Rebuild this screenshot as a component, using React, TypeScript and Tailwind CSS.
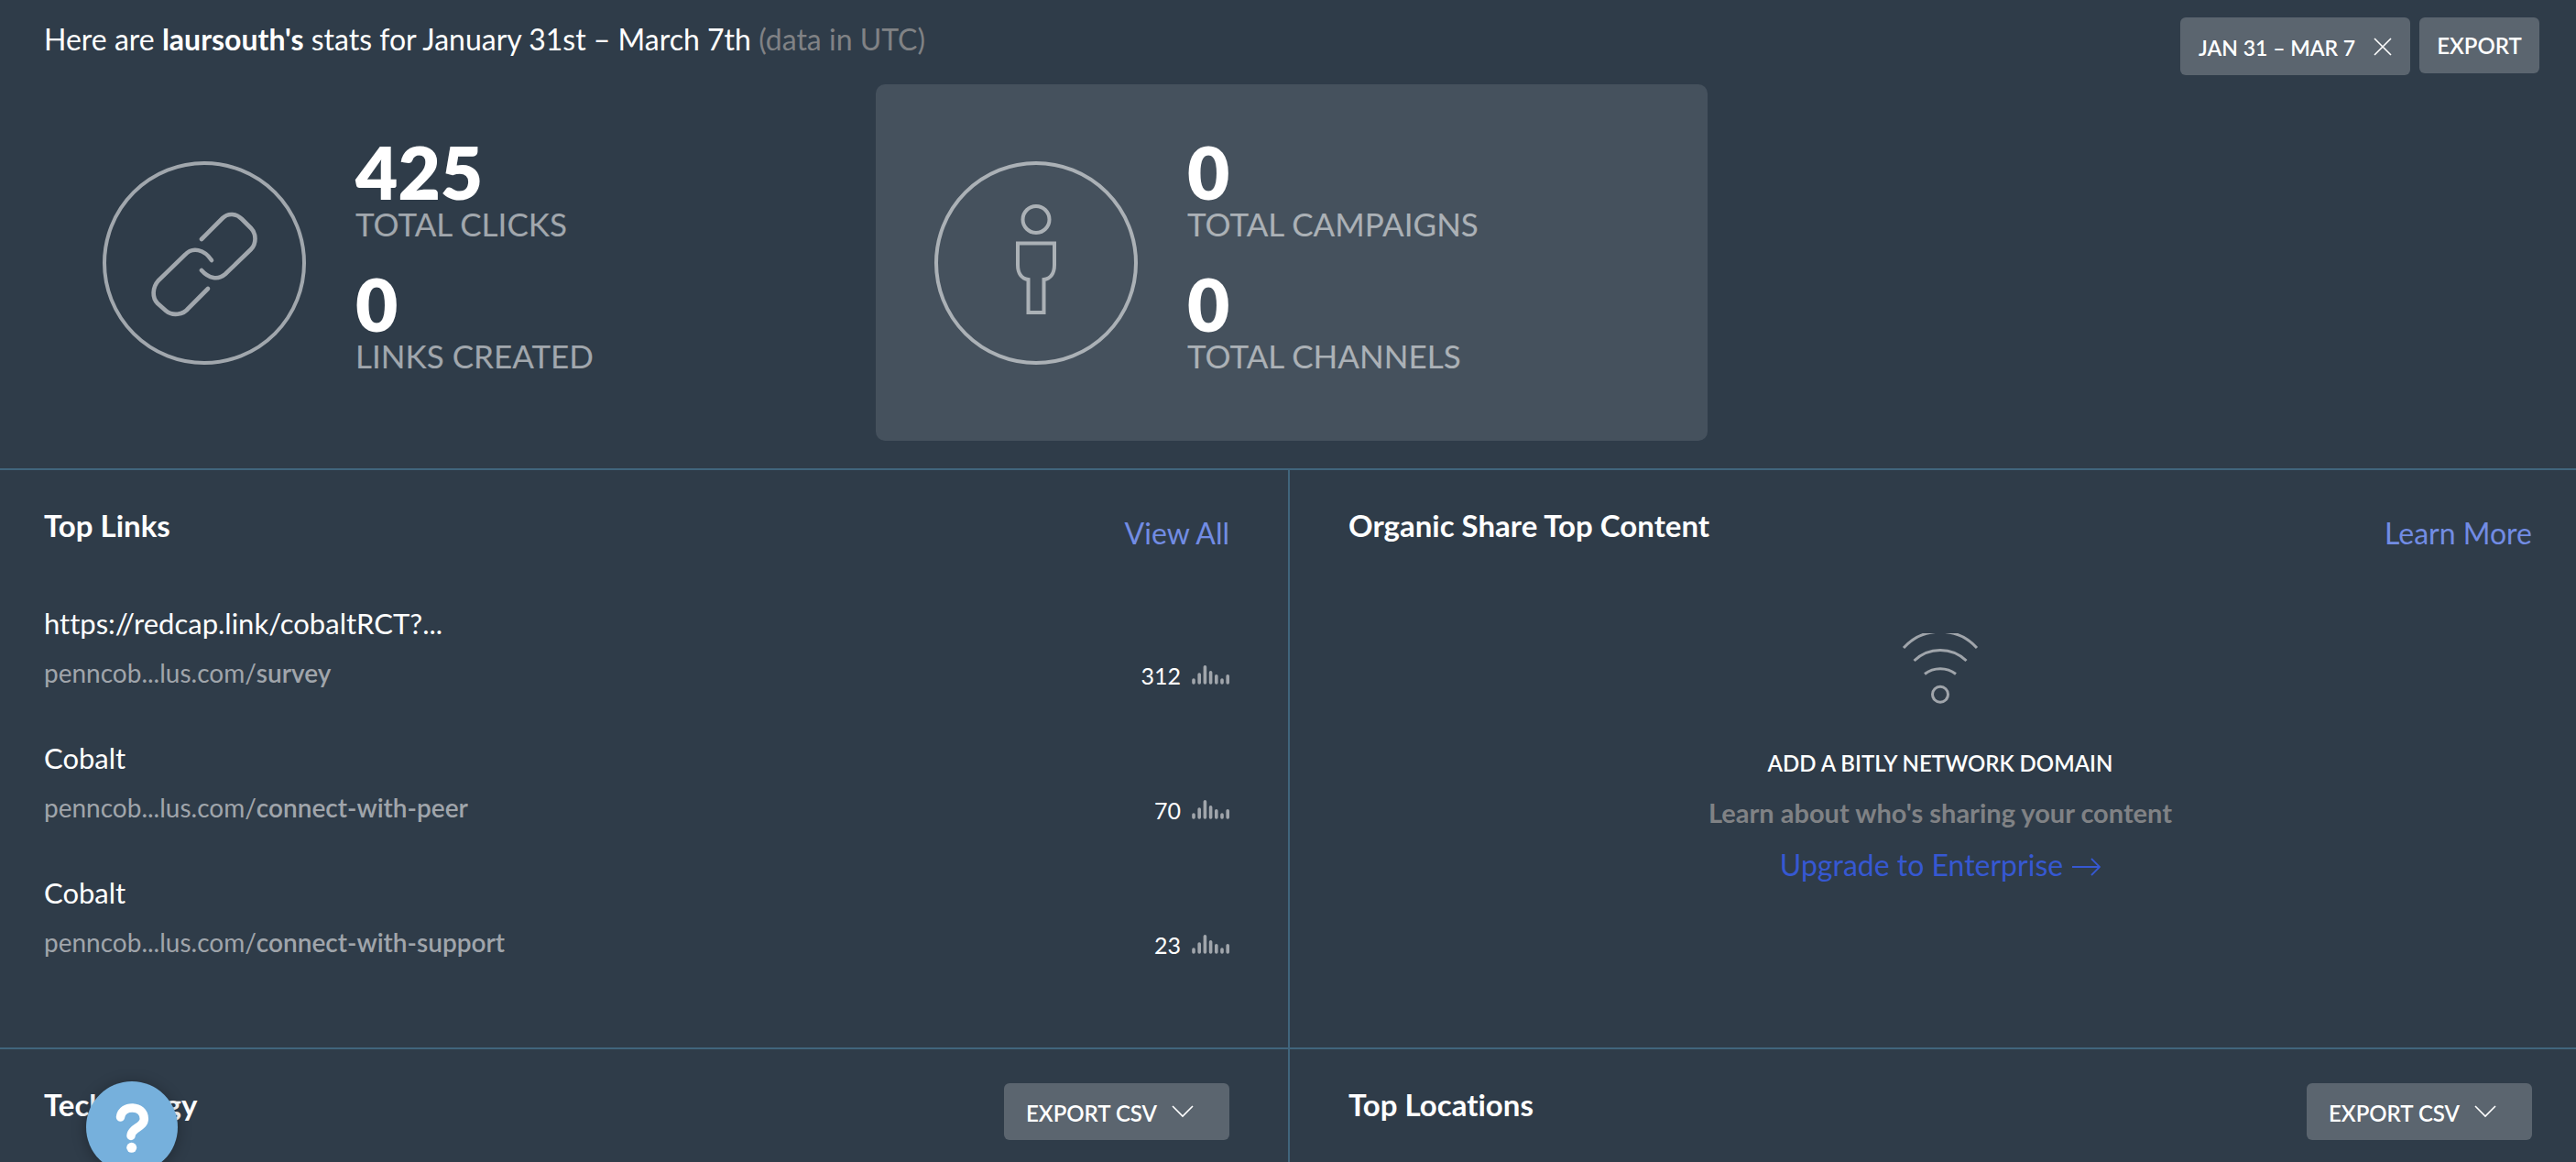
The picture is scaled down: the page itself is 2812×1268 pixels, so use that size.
import React from "react";

type Stat = { value: string; label: string };

function StatCard({
  stats,
  highlighted = false,
  children,
}: {
  stats: Stat[];
  highlighted?: boolean;
  children: React.ReactNode;
}) {
  return (
    <div
      className={
        highlighted
          ? "flex items-start gap-[54px] rounded-[10px] bg-[#45515d] px-16 pt-[60px] pb-[71px]"
          : "flex items-start gap-[54px] rounded-[10px] px-16 pt-[60px] pb-[71px]"
      }
    >
      <svg
        viewBox="0 0 222 222"
        className="mt-6 size-[222px] shrink-0 text-white/55"
        fill="none"
        stroke="currentColor"
        strokeWidth="4"
        aria-hidden="true"
      >
        <circle cx="111" cy="111" r="109" />
        {children}
      </svg>
      <dl className="flex flex-col gap-[30px]">
        {stats.map((s) => (
          <div key={s.label} className="flex flex-col-reverse">
            <dt className="text-[35px] leading-[44px] whitespace-nowrap text-white/55">{s.label}</dt>
            <dd className="text-[80px] leading-[70px] font-extrabold">{s.value}</dd>
          </div>
        ))}
      </dl>
    </div>
  );
}

const LINKS = [
  { title: "https://redcap.link/cobaltRCT?...", slug: "survey", clicks: "312" },
  { title: "Cobalt", slug: "connect-with-peer", clicks: "70" },
  { title: "Cobalt", slug: "connect-with-support", clicks: "23" },
];

function Bars() {
  return (
    <svg viewBox="0 0 41 22" className="h-[22px] w-[41px]" stroke="#a0a5ab" strokeWidth="3.6" strokeLinecap="round" aria-hidden="true">
      <path d="M2 16V19M8.2 10V19M14.4 1.8V19M20.6 7.8V19M26.8 11.8V19M33 16V19M39.2 11.8V19" />
    </svg>
  );
}

function PanelHead({ title, action }: { title: string; action: React.ReactNode }) {
  return (
    <div className="flex items-start justify-between">
      <h2 className="text-[33px] leading-10 font-bold">{title}</h2>
      {action}
    </div>
  );
}

function PanelLink({ children }: { children: React.ReactNode }) {
  return (
    <a href="#" className="mt-2 text-[32px] leading-[42px] text-[#728ce4]">
      {children}
    </a>
  );
}

function ExportCsv() {
  return (
    <button
      type="button"
      className="-mt-[3px] flex h-[62px] w-[246px] items-center gap-4 rounded-md bg-[#5b656f] pt-1 pl-6 text-2xl font-semibold"
    >
      EXPORT CSV
      <svg viewBox="0 0 24 14" className="mb-1 h-[14px] w-6" fill="none" stroke="currentColor" strokeWidth="1.6" aria-hidden="true">
        <path d="M1 1L12 12L23 1" />
      </svg>
    </button>
  );
}

export default function App() {
  return (
    <div className="flex min-h-screen flex-col bg-[#2f3c49] font-['Lato',sans-serif] text-white [font-variant-ligatures:none]">
      <header className="flex items-start justify-between pt-[19px] pr-10 pl-12">
        <h1 className="pt-[3px] text-[32px] leading-[42px]">
          Here are <strong className="font-bold">laursouth's</strong> stats for January 31st – March 7th{" "}
          <span className="text-[#808285]">(data in UTC)</span>
        </h1>
        <div className="flex items-start gap-[10px]">
          <button type="button" className="flex h-[63px] w-[251px] items-center justify-between rounded-md bg-[#5b656f] pt-1 pr-5 pl-5 text-[23px] font-semibold">
            JAN 31 – MAR 7
            <svg viewBox="0 0 20 20" className="mb-1 size-5" stroke="currentColor" strokeWidth="1.6" aria-hidden="true">
              <path d="M1 1L19 19M19 1L1 19" />
            </svg>
          </button>
          <button type="button" className="h-[61px] w-[131px] rounded-md bg-[#5b656f] text-2xl font-semibold">
            EXPORT
          </button>
        </div>
      </header>

      <section aria-label="Totals" className="mt-[10px] grid grid-cols-3 pr-10 pb-[30px] pl-12">
        <StatCard
          stats={[
            { value: "425", label: "TOTAL CLICKS" },
            { value: "0", label: "LINKS CREATED" },
          ]}
        >
          <g strokeWidth="4.6" strokeLinecap="round">
            <path d="M108 85L131 62C137 56 146 57 152 63L162 73C168 79 168 90 162 96L134 123C126 130 116 128 108 119" />
            <path d="M119 108C111 96 98 93 90 102L61 130C54 138 54 149 60 155L69 163C76 169 88 168 94 160L115 139" />
          </g>
        </StatCard>
        <StatCard
          highlighted
          stats={[
            { value: "0", label: "TOTAL CAMPAIGNS" },
            { value: "0", label: "TOTAL CHANNELS" },
          ]}
        >
          <circle cx="111" cy="63.5" r="14.5" />
          <path d="M91 89.5H131V113C131 122 127 128 119.5 129V165H102.5V129C95 128 91 122 91 113Z" />
        </StatCard>
      </section>

      <main className="grid flex-1 grid-cols-2 grid-rows-[auto_1fr]">
        <section className="border-t-2 border-[#41657c] pt-10 pr-16 pb-[88px] pl-12">
          <PanelHead title="Top Links" action={<PanelLink>View All</PanelLink>} />
          <ul className="mt-[50px] flex flex-col gap-[39px]">
            {LINKS.map((l) => (
              <li key={l.slug} className="flex items-end justify-between">
                <div>
                  <div className="text-[31px] leading-[54px]">{l.title}</div>
                  <a href="#" className="block text-[28px] leading-[54px] text-[#a0a5ab]">
                    penncob...lus.com/<b className="font-semibold">{l.slug}</b>
                  </a>
                </div>
                <div className="flex items-center gap-3 pb-[6px] text-[25px] leading-9">
                  {l.clicks}
                  <Bars />
                </div>
              </li>
            ))}
          </ul>
        </section>

        <section className="border-t-2 border-l-2 border-[#41657c] pt-10 pr-12 pl-16">
          <PanelHead title="Organic Share Top Content" action={<PanelLink>Learn More</PanelLink>} />
          <div className="mt-[88px] flex flex-col items-center">
            <svg viewBox="0 1 96 79" className="h-[79px] w-24" fill="none" stroke="#a0a5ab" strokeWidth="3" aria-hidden="true">
              <circle cx="48" cy="67.8" r="8.5" />
              <path d="M31 45.5A28 28 0 0 1 65 45.5M19.5 31A41 41 0 0 1 76.5 31M8 17A54 54 0 0 1 88 17" />
            </svg>
            <p className="mt-[45px] text-2xl leading-9 font-semibold">ADD A BITLY NETWORK DOMAIN</p>
            <p className="mt-4 text-[29px] leading-10 font-bold text-[#808285]">
              Learn about who's sharing your content
            </p>
            <a href="#" className="mt-4 flex items-center gap-[10px] text-[32px] leading-[42px] text-[#3658d2]">
              Upgrade to Enterprise
              <svg viewBox="0 0 31 20" className="mt-1 h-5 w-[31px]" fill="none" stroke="currentColor" strokeWidth="1.8" aria-hidden="true">
                <path d="M0 10H30M21 1L30 10L21 19" />
              </svg>
            </a>
          </div>
        </section>

        <section className="border-t-2 border-[#41657c] pt-10 pr-16 pl-12">
          <PanelHead title="Technology" action={<ExportCsv />} />
        </section>

        <section className="border-t-2 border-l-2 border-[#41657c] pt-10 pr-12 pl-16">
          <PanelHead title="Top Locations" action={<ExportCsv />} />
        </section>
      </main>

      <button
        type="button"
        aria-label="Help"
        className="fixed -bottom-3 left-[94px] size-[100px] rounded-full bg-[#76b0dc] shadow-[0_2px_16px_rgba(0,0,0,0.3)]"
      >
        <svg viewBox="0 0 100 100" className="size-full" fill="none" stroke="white" strokeWidth="9.5" strokeLinecap="round" aria-hidden="true">
          <path d="M37.500 39C39 25 63.300 25.500 63.300 41C63.300 50 49 51 49 59.500" />
          <circle cx="49.700" cy="72.300" r="5.500" fill="white" stroke="none" />
        </svg>
      </button>
    </div>
  );
}
